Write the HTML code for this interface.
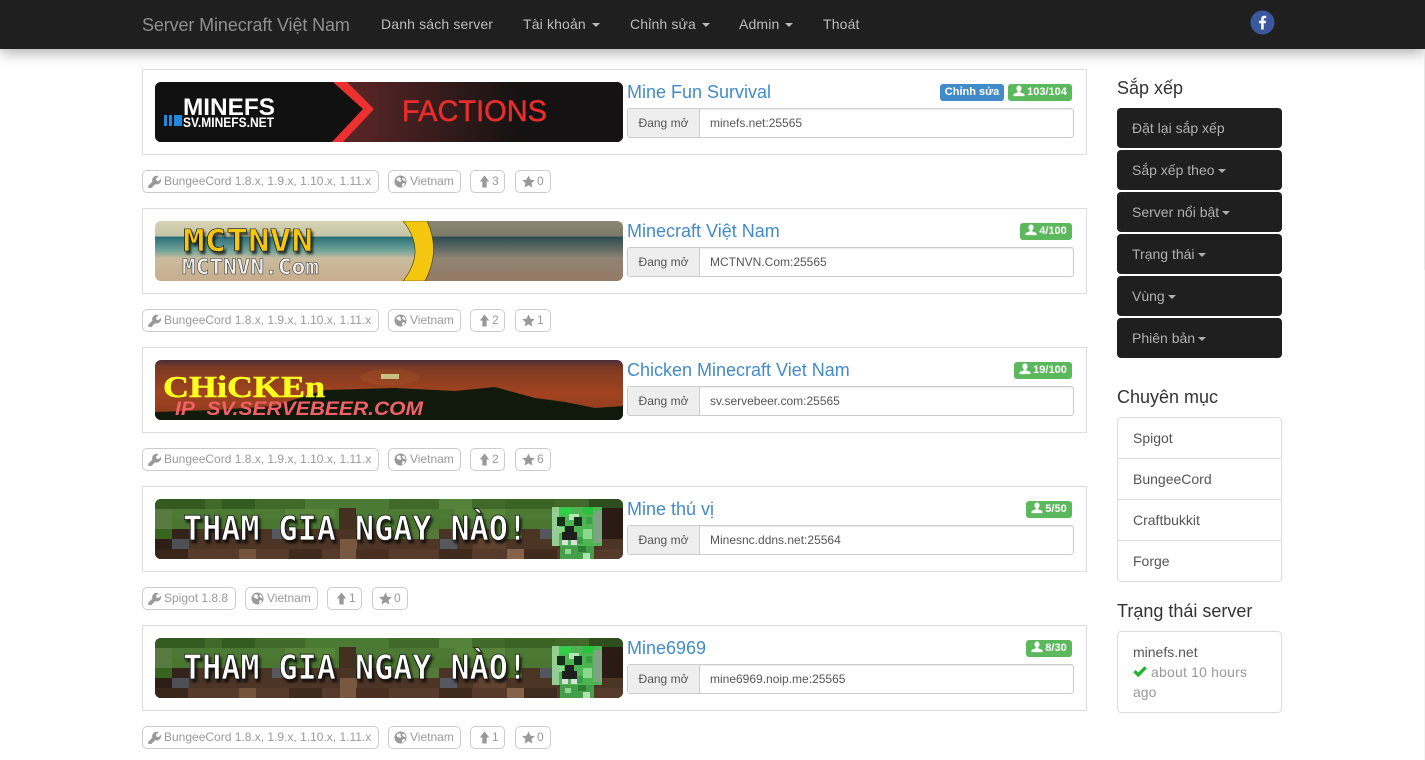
<!DOCTYPE html>
<html lang="vi"><head><meta charset="utf-8"><title>Server Minecraft Việt Nam</title>
<style>
*{box-sizing:border-box}
html,body{margin:0;padding:0;width:1425px;height:760px;overflow:hidden;background:#fff;font-family:"Liberation Sans","Noto Sans CJK JP",sans-serif;font-size:14px;color:#333}
.a{position:absolute;white-space:nowrap}
.nav{position:absolute;left:0;top:0;width:1425px;height:49px;background:#1f1f1f;box-shadow:0 3px 14px rgba(0,0,0,.35)}
.nl{position:absolute;top:14px;line-height:20px;color:#bcbcbc;font-size:14px;letter-spacing:.15px;white-space:nowrap}
.caret{display:inline-block;width:0;height:0;margin-left:3px;vertical-align:middle;border-top:4px solid;border-left:4px solid transparent;border-right:4px solid transparent}
.nl .caret{margin-left:6px}
.panel{position:absolute;left:142px;width:945px;height:86px;border:1px solid #ddd}
.ban{position:absolute;left:155px;width:468px;height:60px;border-radius:6px;display:block}
.t{position:absolute;left:627px;font-size:18px;line-height:20px;color:#428bca;white-space:nowrap}
.badge{position:absolute;height:17px;border-radius:3px;color:#fff;font-size:11px;font-weight:bold;line-height:17px;text-align:center;white-space:nowrap}
.g{background:#5cb85c}.b{background:#428bca}
.badge svg{width:12px;height:12px;vertical-align:-2px;margin-right:2px}
.ig{position:absolute;left:627px;width:447px;height:30px;border:1px solid #ccc;border-radius:3px;font-size:12px;line-height:28px;color:#555;box-shadow:inset 0 1px 1px rgba(0,0,0,.075)}
.ig b{position:absolute;left:0;top:0;height:28px;width:72px;background:#eee;border-right:1px solid #ccc;font-weight:normal;text-align:center;border-radius:2px 0 0 2px}
.ig span{position:absolute;left:82px;top:0;white-space:nowrap}
.tag{position:absolute;height:23px;border:1px solid #ccc;border-radius:5px;color:#999;font-size:12px;line-height:21px;white-space:nowrap;padding-left:21px}
.tag svg{position:absolute;left:5px;top:4px;width:13px;height:13px;fill:#999}
.sb{position:absolute;left:1117px;width:165px;height:40px;background:#1f1f1f;border-radius:4px;color:#b0b0b0;font-size:14px;line-height:40px;padding-left:15px;white-space:nowrap}
.h{position:absolute;left:1117px;font-size:18px;line-height:20px;color:#333;white-space:nowrap}
.li{position:absolute;left:1117px;width:165px;height:42px;border:1px solid #ddd;padding-left:15px;line-height:40px;color:#555;font-size:14px}
.px{filter:drop-shadow(2px 3px 1px rgba(0,0,0,.65))}
</style></head><body>
<svg width="0" height="0" style="position:absolute"><defs>
<g id="dirt">
<rect width="468" height="60" fill="#3c2a1d"/>
<rect width="468" height="10" fill="#40692a"/>
<rect y="10" width="468" height="10" fill="#4c7a34"/>
<rect y="20" width="468" height="10" fill="#4a7631"/>
<rect y="30" width="468" height="10" fill="#4a3424"/>
<rect y="40" width="468" height="10" fill="#4d3526"/>
<rect y="50" width="468" height="10" fill="#563a2a"/>
<rect x="0" y="0" width="50" height="10" fill="#345a22"/><rect x="67" y="0" width="33" height="10" fill="#325b20"/>
<rect x="150" y="0" width="84" height="10" fill="#4a7a33"/><rect x="284" y="0" width="33" height="10" fill="#54823b"/>
<rect x="350" y="0" width="50" height="10" fill="#3a6324"/><rect x="434" y="0" width="34" height="10" fill="#2f4e20"/>
<rect x="0" y="10" width="17" height="20" fill="#587a40"/><rect x="130" y="10" width="50" height="10" fill="#578539"/>
<rect x="184" y="9" width="17" height="21" fill="#44301f"/><rect x="300" y="10" width="50" height="10" fill="#578539"/>
<rect x="440" y="9" width="28" height="31" fill="#2a1b14"/><rect x="400" y="20" width="17" height="10" fill="#3a2a1c"/>
<rect x="0" y="30" width="17" height="10" fill="#37641f"/><rect x="17" y="30" width="17" height="10" fill="#33231a"/>
<rect x="117" y="30" width="17" height="10" fill="#55585e"/><rect x="234" y="30" width="50" height="10" fill="#56793a"/>
<rect x="385" y="30" width="17" height="10" fill="#53565c"/><rect x="334" y="30" width="33" height="10" fill="#4b6f2c"/>
<rect x="0" y="40" width="17" height="10" fill="#2e1f16"/><rect x="17" y="40" width="17" height="10" fill="#4d5055"/>
<rect x="285" y="40" width="17" height="10" fill="#55585e"/><rect x="318" y="40" width="33" height="10" fill="#5f4230"/>
<rect x="0" y="50" width="33" height="10" fill="#3a2618"/><rect x="84" y="50" width="17" height="10" fill="#75543c"/>
<rect x="134" y="50" width="33" height="10" fill="#3f2a1c"/><rect x="185" y="40" width="17" height="20" fill="#785840"/>
<rect x="201" y="50" width="33" height="10" fill="#4a2e20"/><rect x="284" y="50" width="33" height="10" fill="#3f2a1c"/>
<rect x="352" y="50" width="17" height="10" fill="#86624a"/><rect x="369" y="50" width="33" height="10" fill="#402b1e"/>
<rect x="405" y="47" width="34" height="13" fill="#459f4a"/>
<rect x="410" y="50" width="6" height="5" fill="#8fd98f"/><rect x="423" y="47" width="8" height="6" fill="#2a7f35"/><rect x="428" y="54" width="7" height="6" fill="#b0e0b0"/>
<rect x="397" y="8" width="50" height="39" fill="#4eb555"/>
<rect x="397" y="8" width="7" height="39" fill="#93cf93"/><rect x="404" y="9" width="12" height="7" fill="#30d146"/><rect x="428" y="8" width="10" height="7" fill="#24c438"/>
<rect x="438" y="12" width="9" height="32" fill="#7ea383"/><rect x="414" y="15" width="10" height="6" fill="#b5e7b5"/><rect x="428" y="30" width="9" height="10" fill="#8dd88d"/>
<rect x="404" y="28" width="5" height="6" fill="#8dd88d"/><rect x="431" y="18" width="6" height="7" fill="#3aa046"/><rect x="422" y="38" width="6" height="7" fill="#3aa046"/>
<rect x="402" y="18" width="8" height="9" fill="#14301a"/><rect x="419" y="18" width="8" height="9" fill="#14301a"/>
<rect x="410" y="27" width="9" height="6" fill="#1e1e1e"/><rect x="407" y="33" width="15" height="8" fill="#1e1e1e"/><rect x="407" y="41" width="6" height="5" fill="#ddd"/><rect x="416" y="41" width="6" height="5" fill="#ddd"/>
</g>
<path id="wr" d="M13 3.6l-2.6 2.6-1.9-.6-.6-1.9L10.500 1.100C8.600.4 6.600.9 5.400 2.200 4.200 3.400 3.900 5.100 4.400 6.600L.7 10.300c-.8.8-.8 2 0 2.700.8.800 2 .8 2.700 0L7.100 9.300c1.500.5 3.200.2 4.500-1C12.900 7 13.400 5.200 13 3.600z"/>
<path id="gl" fill-rule="evenodd" d="M6.500 .5a6 6 0 1 0 0 12 6 6 0 0 0 0-12zM3 3l2.500-.8 1.500 1-.8 1.300 1.300 1-1 1.500L3.800 6 2.500 5zM8.500 12l-.5-2.500 1-1.500 2 .5L10 11zM9 2.500l2 1.500.8 2.500-2.300-1L8 4z"/>
<path id="up" d="M8.500.5L13.200 6.500H10.700V12.500H6.300V6.500H3.800z"/>
<path id="st" d="M7.500 .5l1.900 4.100 4.400.5-3.300 3 .9 4.400-3.900-2.200-3.900 2.200.9-4.400-3.300-3 4.400-.5z"/>
<path id="us" d="M6 .5c1.700 0 2.800 1.400 2.800 3.200 0 1.300-.6 2.500-1.500 3.100v1l3.700 1.500c.6.300 1 .8 1 1.500v1.200H0v-1.200c0-.7.4-1.200 1-1.500l3.700-1.500v-1C3.800 6.200 3.200 5 3.200 3.700 3.200 1.900 4.300.5 6 .5z"/>
<linearGradient id="fc" x1="0" x2="1" y1="0" y2="0"><stop offset=".1" stop-color="#552424"/><stop offset=".65" stop-color="#141212"/></linearGradient>
<linearGradient id="sea" x1="0" x2="0" y1="0" y2="1"><stop offset="0" stop-color="#d8d2b2"/><stop offset=".25" stop-color="#c4c6a8"/><stop offset=".27" stop-color="#2a7078"/><stop offset=".5" stop-color="#74a59a"/><stop offset=".62" stop-color="#c9bc9e"/><stop offset="1" stop-color="#c8ad8c"/></linearGradient>
<linearGradient id="sea2" x1="0" x2="0" y1="0" y2="1"><stop offset="0" stop-color="#8c8674"/><stop offset=".25" stop-color="#7c7a68"/><stop offset=".27" stop-color="#2f4d52"/><stop offset=".5" stop-color="#6a7068"/><stop offset=".62" stop-color="#8f8472"/><stop offset="1" stop-color="#957a64"/></linearGradient>
<linearGradient id="sun" x1="0" x2="0" y1="0" y2="1"><stop offset="0" stop-color="#472c3c"/><stop offset=".12" stop-color="#7b3a22"/><stop offset=".55" stop-color="#a2431f"/><stop offset="1" stop-color="#8a3a1e"/></linearGradient>
</defs></svg>

<div class="nav"></div>
<div class="a" style="left:142px;top:15px;font-size:18px;line-height:20px;letter-spacing:-.12px;color:#8f8f8f">Server Minecraft Việt Nam</div>
<div class="nl" style="left:381px">Danh sách server</div>
<div class="nl" style="left:523px">Tài khoản<span class="caret"></span></div>
<div class="nl" style="left:630px">Chỉnh sửa<span class="caret"></span></div>
<div class="nl" style="left:739px">Admin<span class="caret"></span></div>
<div class="nl" style="left:823px">Thoát</div>
<svg class="a" style="left:1250px;top:10px" width="25" height="25" viewBox="0 0 25 25"><circle cx="12.500" cy="12.500" r="12" fill="#3b579d"/><path d="M13.700 19.500v-6.300h2.200l.3-2.500h-2.500V9.300c0-.7.2-1.200 1.200-1.200h1.300V5.900c-.3 0-1-.1-1.900-.1-1.900 0-3.100 1.100-3.100 3.200v1.700H9v2.500h2.200v6.300z" fill="#fff"/></svg>
<div class="a" style="left:1424px;top:50px;width:1px;height:220px;background:#e6e6e6"></div>
<div class="a" style="left:1424px;top:270px;width:1px;height:490px;background:#f5f5f5"></div>

<!-- 1 -->
<div class="panel" style="top:69px"></div>
<svg class="ban" style="top:82px" viewBox="0 0 468 60"><rect width="468" height="60" fill="#111"/><rect x="180" width="288" height="60" fill="url(#fc)"/><polygon points="0,0 178,0 208,27 177,60 0,60" fill="#111"/><polygon points="178,0 192,0 219,27 188,60 177,60 208,27" fill="#ec2f2f"/><rect x="9" y="33" width="3" height="11" fill="#2288dd"/><rect x="14" y="33" width="3" height="11" fill="#2288dd"/><rect x="19" y="33" width="8" height="11" fill="#2288dd"/>
<text x="28" y="33" font-family="Liberation Sans" font-weight="bold" font-size="24" fill="#fff" textLength="92" lengthAdjust="spacingAndGlyphs">MINEFS</text>
<text x="28" y="45" font-family="Liberation Sans" font-weight="bold" font-size="13.500" fill="#fff" textLength="91" lengthAdjust="spacingAndGlyphs">SV.MINEFS.NET</text>
<text x="247" y="39" font-family="Liberation Sans" font-size="30" fill="#e92c2c" stroke="#e92c2c" stroke-width=".5" textLength="145" lengthAdjust="spacingAndGlyphs">FACTIONS</text></svg>
<div class="t" style="top:82px">Mine Fun Survival</div>
<div class="badge b" style="left:940px;top:84px;width:64px">Chỉnh sửa</div>
<div class="badge g" style="left:1008px;top:84px;width:64px"><svg viewBox="0 0 12 13" fill="#fff"><use href="#us"/></svg>103/104</div>
<div class="ig" style="top:108px"><b>Đang mở</b><span>minefs.net:25565</span></div>
<div class="tag" style="left:142px;top:170px;width:237px"><svg viewBox="0 0 13 13"><use href="#wr"/></svg>BungeeCord 1.8.x, 1.9.x, 1.10.x, 1.11.x</div>
<div class="tag" style="left:388px;top:170px;width:73px"><svg viewBox="0 0 13 13"><use href="#gl"/></svg>Vietnam</div>
<div class="tag" style="left:470px;top:170px;width:35px"><svg viewBox="0 0 13 13"><use href="#up"/></svg>3</div>
<div class="tag" style="left:515px;top:170px;width:36px"><svg viewBox="0 0 14 13" style="width:14px"><use href="#st"/></svg>0</div>

<!-- 2 -->
<div class="panel" style="top:208px"></div>
<svg class="ban" style="top:221px" viewBox="0 0 468 60"><rect width="270" height="60" fill="url(#sea)"/><rect x="262" width="206" height="60" fill="url(#sea2)"/><path d="M248 0Q272 30 248 60H270Q286 30 272 0Z" fill="#f5c60f" stroke="#3a3a10" stroke-width=".6"/>
<text x="28" y="30" font-family="DejaVu Sans Mono,Liberation Mono" font-weight="bold" font-size="30" fill="#f5c60f" stroke="#111" stroke-width=".6" textLength="130" lengthAdjust="spacingAndGlyphs" class="px">MCTNVN</text>
<text x="27" y="53" font-family="DejaVu Sans Mono,Liberation Mono" font-weight="bold" font-size="21" fill="#eee" stroke="#333" stroke-width=".5" textLength="137" lengthAdjust="spacingAndGlyphs">MCTNVN.Com</text></svg>
<div class="t" style="top:221px">Minecraft Việt Nam</div>
<div class="badge g" style="left:1020px;top:223px;width:52px"><svg viewBox="0 0 12 13" fill="#fff"><use href="#us"/></svg>4/100</div>
<div class="ig" style="top:247px"><b>Đang mở</b><span>MCTNVN.Com:25565</span></div>
<div class="tag" style="left:142px;top:309px;width:237px"><svg viewBox="0 0 13 13"><use href="#wr"/></svg>BungeeCord 1.8.x, 1.9.x, 1.10.x, 1.11.x</div>
<div class="tag" style="left:388px;top:309px;width:73px"><svg viewBox="0 0 13 13"><use href="#gl"/></svg>Vietnam</div>
<div class="tag" style="left:470px;top:309px;width:35px"><svg viewBox="0 0 13 13"><use href="#up"/></svg>2</div>
<div class="tag" style="left:515px;top:309px;width:36px"><svg viewBox="0 0 14 13" style="width:14px"><use href="#st"/></svg>1</div>

<!-- 3 -->
<div class="panel" style="top:347px"></div>
<svg class="ban" style="top:360px" viewBox="0 0 468 60"><rect width="468" height="60" fill="url(#sun)"/><polygon points="0,60 0,52 60,50 120,46 150,36 170,30 240,28 300,31 340,27 380,38 410,42 440,48 468,46 468,60" fill="#10190b"/><ellipse cx="235" cy="17" rx="30" ry="8" fill="#c86a30" opacity=".18"/><rect x="226" y="14" width="18" height="5" fill="#c9c183"/>
<text x="8" y="37" font-family="Liberation Serif" font-weight="bold" font-size="31" fill="#ffff1e" stroke="#ffff1e" stroke-width=".5" textLength="162" lengthAdjust="spacingAndGlyphs">CHiCKEn</text>
<text x="20" y="55" font-family="Liberation Sans" font-weight="bold" font-style="italic" font-size="19" fill="#f2606a" textLength="248" lengthAdjust="spacingAndGlyphs">IP&#160;&#160;SV.SERVEBEER.COM</text></svg>
<div class="t" style="top:360px">Chicken Minecraft Viet Nam</div>
<div class="badge g" style="left:1014px;top:362px;width:58px"><svg viewBox="0 0 12 13" fill="#fff"><use href="#us"/></svg>19/100</div>
<div class="ig" style="top:386px"><b>Đang mở</b><span>sv.servebeer.com:25565</span></div>
<div class="tag" style="left:142px;top:448px;width:237px"><svg viewBox="0 0 13 13"><use href="#wr"/></svg>BungeeCord 1.8.x, 1.9.x, 1.10.x, 1.11.x</div>
<div class="tag" style="left:388px;top:448px;width:73px"><svg viewBox="0 0 13 13"><use href="#gl"/></svg>Vietnam</div>
<div class="tag" style="left:470px;top:448px;width:35px"><svg viewBox="0 0 13 13"><use href="#up"/></svg>2</div>
<div class="tag" style="left:515px;top:448px;width:36px"><svg viewBox="0 0 14 13" style="width:14px"><use href="#st"/></svg>6</div>

<!-- 4 -->
<div class="panel" style="top:486px"></div>
<svg class="ban" style="top:499px" viewBox="0 0 468 60"><use href="#dirt"/>
<text x="28" y="41" font-family="DejaVu Sans Mono,Liberation Mono" font-weight="bold" font-size="34" fill="#fff" stroke="#111" stroke-width=".8" textLength="344" lengthAdjust="spacingAndGlyphs" class="px">THAM GIA NGAY NÀO!</text></svg>
<div class="t" style="top:499px">Mine thú vị</div>
<div class="badge g" style="left:1026px;top:501px;width:46px"><svg viewBox="0 0 12 13" fill="#fff"><use href="#us"/></svg>5/50</div>
<div class="ig" style="top:525px"><b>Đang mở</b><span>Minesnc.ddns.net:25564</span></div>
<div class="tag" style="left:142px;top:587px;width:94px"><svg viewBox="0 0 13 13"><use href="#wr"/></svg>Spigot 1.8.8</div>
<div class="tag" style="left:245px;top:587px;width:73px"><svg viewBox="0 0 13 13"><use href="#gl"/></svg>Vietnam</div>
<div class="tag" style="left:327px;top:587px;width:35px"><svg viewBox="0 0 13 13"><use href="#up"/></svg>1</div>
<div class="tag" style="left:372px;top:587px;width:36px"><svg viewBox="0 0 14 13" style="width:14px"><use href="#st"/></svg>0</div>

<!-- 5 -->
<div class="panel" style="top:625px"></div>
<svg class="ban" style="top:638px" viewBox="0 0 468 60"><use href="#dirt"/>
<text x="28" y="41" font-family="DejaVu Sans Mono,Liberation Mono" font-weight="bold" font-size="34" fill="#fff" stroke="#111" stroke-width=".8" textLength="344" lengthAdjust="spacingAndGlyphs" class="px">THAM GIA NGAY NÀO!</text></svg>
<div class="t" style="top:638px">Mine6969</div>
<div class="badge g" style="left:1026px;top:640px;width:46px"><svg viewBox="0 0 12 13" fill="#fff"><use href="#us"/></svg>8/30</div>
<div class="ig" style="top:664px"><b>Đang mở</b><span>mine6969.noip.me:25565</span></div>
<div class="tag" style="left:142px;top:726px;width:237px"><svg viewBox="0 0 13 13"><use href="#wr"/></svg>BungeeCord 1.8.x, 1.9.x, 1.10.x, 1.11.x</div>
<div class="tag" style="left:388px;top:726px;width:73px"><svg viewBox="0 0 13 13"><use href="#gl"/></svg>Vietnam</div>
<div class="tag" style="left:470px;top:726px;width:35px"><svg viewBox="0 0 13 13"><use href="#up"/></svg>1</div>
<div class="tag" style="left:515px;top:726px;width:36px"><svg viewBox="0 0 14 13" style="width:14px"><use href="#st"/></svg>0</div>

<!-- sidebar -->
<div class="h" style="top:78px">Sắp xếp</div>
<div class="sb" style="top:108px">Đặt lại sắp xếp</div>
<div class="sb" style="top:150px">Sắp xếp theo<span class="caret"></span></div>
<div class="sb" style="top:192px">Server nổi bật<span class="caret"></span></div>
<div class="sb" style="top:234px">Trạng thái<span class="caret"></span></div>
<div class="sb" style="top:276px">Vùng<span class="caret"></span></div>
<div class="sb" style="top:318px">Phiên bản<span class="caret"></span></div>

<div class="h" style="top:387px">Chuyên mục</div>
<div class="li" style="top:417px;border-radius:4px 4px 0 0">Spigot</div>
<div class="li" style="top:458px">BungeeCord</div>
<div class="li" style="top:499px">Craftbukkit</div>
<div class="li" style="top:540px;border-radius:0 0 4px 4px">Forge</div>

<div class="h" style="top:601px">Trạng thái server</div>
<div class="a" style="left:1117px;top:631px;width:165px;height:82px;border:1px solid #ddd;border-radius:4px"></div>
<div class="a" style="left:1133px;top:642px;line-height:20px;color:#555">minefs.net</div>
<svg class="a" style="left:1133px;top:665px" width="14" height="13" viewBox="0 0 14 13"><path d="M.3 7.300L2.600 5 5.200 7.600 11.500 1.300 13.800 3.600 5.200 12.200z" fill="#1fb32e"/></svg>
<div class="a" style="left:1151px;top:662px;line-height:20px;letter-spacing:.2px;color:#999">about 10 hours</div>
<div class="a" style="left:1133px;top:682px;line-height:20px;color:#999">ago</div>
</body></html>
